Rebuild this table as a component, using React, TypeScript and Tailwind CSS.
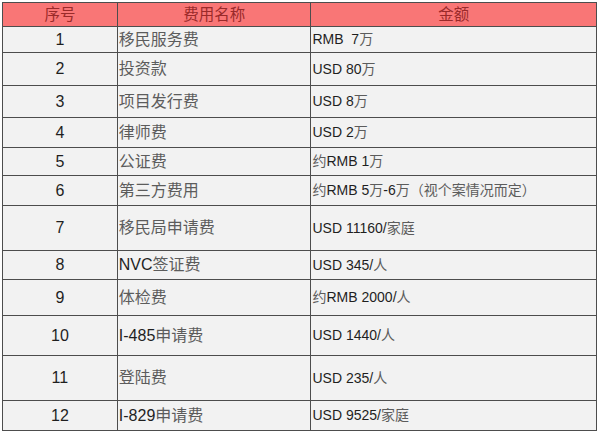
const rows: { no: string; name: string; amount: string; h: number }[] = [
  { no: '1', name: '移民服务费', amount: 'RMB\u00a0 7万', h: 26 },
  { no: '2', name: '投资款', amount: 'USD 80万', h: 33 },
  { no: '3', name: '项目发行费', amount: 'USD 8万', h: 32 },
  { no: '4', name: '律师费', amount: 'USD 2万', h: 30 },
  { no: '5', name: '公证费', amount: '约RMB 1万', h: 28 },
  { no: '6', name: '第三方费用', amount: '约RMB 5万-6万（视个案情况而定）', h: 30 },
  { no: '7', name: '移民局申请费', amount: 'USD 11160/家庭', h: 45 },
  { no: '8', name: 'NVC签证费', amount: 'USD 345/人', h: 29 },
  { no: '9', name: '体检费', amount: '约RMB 2000/人', h: 36 },
  { no: '10', name: 'I-485申请费', amount: 'USD 1440/人', h: 40 },
  { no: '11', name: '登陆费', amount: 'USD 235/人', h: 45 },
  { no: '12', name: 'I-829申请费', amount: 'USD 9525/家庭', h: 30 },
];

// CJK parts render a bit lighter than the Latin parts in the screenshot
const Mixed = ({ text }: { text: string }) => (
  <>
    {text.split(/([\u4e00-\u9fff\uff08\uff09]+)/).map((part, i) =>
      /[\u4e00-\u9fff\uff08\uff09]/.test(part) ? (
        <span key={i} className="text-[#5c5c5c]">
          {part}
        </span>
      ) : (
        <span key={i}>{part}</span>
      )
    )}
  </>
);

export default function App() {
  return (
    <div
      className="w-[600px] h-[435px] bg-white p-[2px]"
      style={{ fontFamily: '"Liberation Sans", "Noto Sans CJK SC", sans-serif' }}
    >
      <div className="w-[595px] border-l border-t border-[#4d4d4d] text-[#1f1f1f]">
        <div className="flex h-[24px] bg-[#f97676] text-[#9a2a2a] text-[15.5px]">
          <div className="w-[115px] border-r border-b border-[#4d4d4d] flex items-center justify-center">序号</div>
          <div className="w-[194px] border-r border-b border-[#4d4d4d] flex items-center justify-center">费用名称</div>
          <div className="w-[286px] border-r border-b border-[#4d4d4d] flex items-center justify-center">金额</div>
        </div>
        {rows.map((r) => (
          <div key={r.no} className="flex bg-[#f2f2f2]" style={{ height: r.h }}>
            <div className="w-[115px] border-r border-b border-[#4d4d4d] flex items-center justify-center text-[16px]">
              {r.no}
            </div>
            <div className="w-[194px] border-r border-b border-[#4d4d4d] flex items-center pl-[1px] text-[16px]">
              <Mixed text={r.name} />
            </div>
            <div className="w-[286px] border-r border-b border-[#4d4d4d] flex items-center pl-[1px] text-[14px] whitespace-pre">
              <Mixed text={r.amount} />
            </div>
          </div>
        ))}
      </div>
    </div>
  );
}
